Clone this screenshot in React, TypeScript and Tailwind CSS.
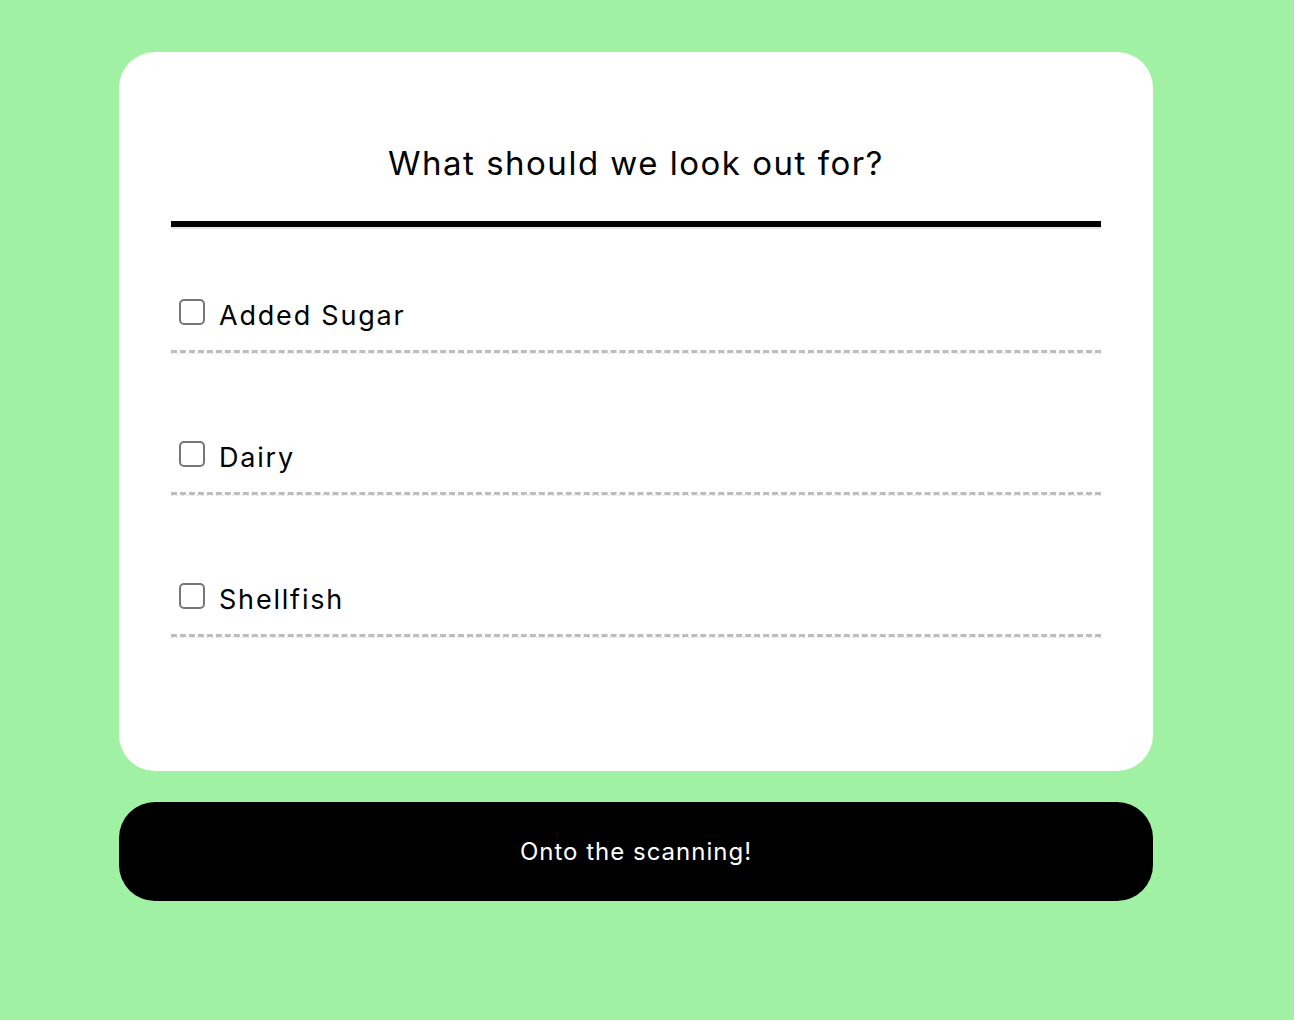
import React from "react";

const items = ["Added Sugar", "Dairy", "Shellfish"];

export default function App() {
  return (
    <div className="min-h-[1020px] w-full bg-[#a1f1a4] pt-[52px] pl-[119px]" style={{ fontFamily: "Inter, 'Liberation Sans', sans-serif" }}>
      <div className="w-[1034px]">
        <div className="rounded-[36px] bg-white px-[52px] pt-[90px] pb-[133px]">
          <h1 className="text-center text-[33px] leading-[42px] font-normal text-black tracking-[1.5px]">What should we look out for?</h1>
          <div className="mt-[37px] border-t-[6px] border-b-[2px] border-t-black border-b-[#e4e4e4]" />
          <div className="flex flex-col">
            {items.map((t, i) => (
              <div key={t} className={i === 0 ? "pt-[70px]" : "pt-[87px]"}>
                <label className="flex items-start gap-[14px] pl-[8px]">
                  <span className="h-[26px] w-[26px] rounded-[5px] border-2 border-[#767676] bg-white shrink-0" />
                  <span className="text-[27px] leading-[34px] text-black tracking-[1.8px]">{t}</span>
                </label>
                <div className="mt-[17px] border-t-[3px] border-b-[1px] border-dashed border-t-[#bdbdbd] border-b-[#e8e8e8]" />
              </div>
            ))}
          </div>
        </div>
        <button className="mt-[31px] flex h-[99px] w-full items-center justify-center rounded-[36px] bg-black text-[24px] text-white tracking-[1px]">
          Onto the scanning!
        </button>
      </div>
    </div>
  );
}
